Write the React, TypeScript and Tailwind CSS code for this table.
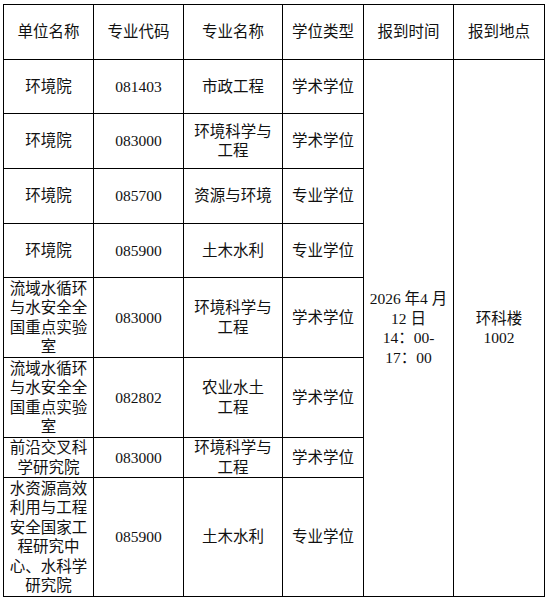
import React from "react";

type Row = {
  unit: string[];
  code: string;
  name: string[];
  type: string;
  h: string;
};

const rows: Row[] = [
  { unit: ["环境院"], code: "081403", name: ["市政工程"], type: "学术学位", h: "h-[54px]" },
  { unit: ["环境院"], code: "083000", name: ["环境科学与", "工程"], type: "学术学位", h: "h-[55px]" },
  { unit: ["环境院"], code: "085700", name: ["资源与环境"], type: "专业学位", h: "h-[55px]" },
  { unit: ["环境院"], code: "085900", name: ["土木水利"], type: "专业学位", h: "h-[54px]" },
  {
    unit: ["流域水循环", "与水安全全", "国重点实验", "室"],
    code: "083000",
    name: ["环境科学与", "工程"],
    type: "学术学位",
    h: "h-[80px]",
  },
  {
    unit: ["流域水循环", "与水安全全", "国重点实验", "室"],
    code: "082802",
    name: ["农业水土", "工程"],
    type: "学术学位",
    h: "h-[80px]",
  },
  { unit: ["前沿交叉科", "学研究院"], code: "083000", name: ["环境科学与", "工程"], type: "学术学位", h: "h-[40px]" },
  {
    unit: ["水资源高效", "利用与工程", "安全国家工", "程研究中", "心、水科学", "研究院"],
    code: "085900",
    name: ["土木水利"],
    type: "专业学位",
    h: "h-[119px]",
  },
];

function Lines({ lines }: { lines: string[] }) {
  return (
    <>
      {lines.map((l, i) => (
        <div key={i}>{l}</div>
      ))}
    </>
  );
}

const td = "border border-black text-center align-middle px-[4px] py-0";

export default function App() {
  return (
    <div className="bg-white w-[546px] h-[602px] pt-[4px] pl-[3px] font-['Liberation_Serif','Noto_Sans_CJK_SC',serif] text-[15.5px] leading-[19.5px] text-[#111]">
      <table className="table-fixed border-collapse w-[541px]">
        <colgroup>
          <col className="w-[90px]" />
          <col className="w-[90px]" />
          <col className="w-[99px]" />
          <col className="w-[81px]" />
          <col className="w-[90px]" />
          <col className="w-[91px]" />
        </colgroup>
        <tbody>
          <tr className="h-[55px]">
            <td className={td}>单位名称</td>
            <td className={td}>专业代码</td>
            <td className={td}>专业名称</td>
            <td className={td}>学位类型</td>
            <td className={td}>报到时间</td>
            <td className={td}>报到地点</td>
          </tr>
          {rows.map((r, i) => (
            <tr key={i} className={r.h}>
              <td className={td}>
                <Lines lines={r.unit} />
              </td>
              <td className={td}>{r.code}</td>
              <td className={td}>
                <Lines lines={r.name} />
              </td>
              <td className={td}>{r.type}</td>
              {i === 0 && (
                <>
                  <td className={td} rowSpan={8}>
                    <div>2026 年4 月</div>
                    <div>12 日</div>
                    <div>14：00-</div>
                    <div>17：00</div>
                  </td>
                  <td className={td} rowSpan={8}>
                    <div>环科楼</div>
                    <div>1002</div>
                  </td>
                </>
              )}
            </tr>
          ))}
        </tbody>
      </table>
    </div>
  );
}
